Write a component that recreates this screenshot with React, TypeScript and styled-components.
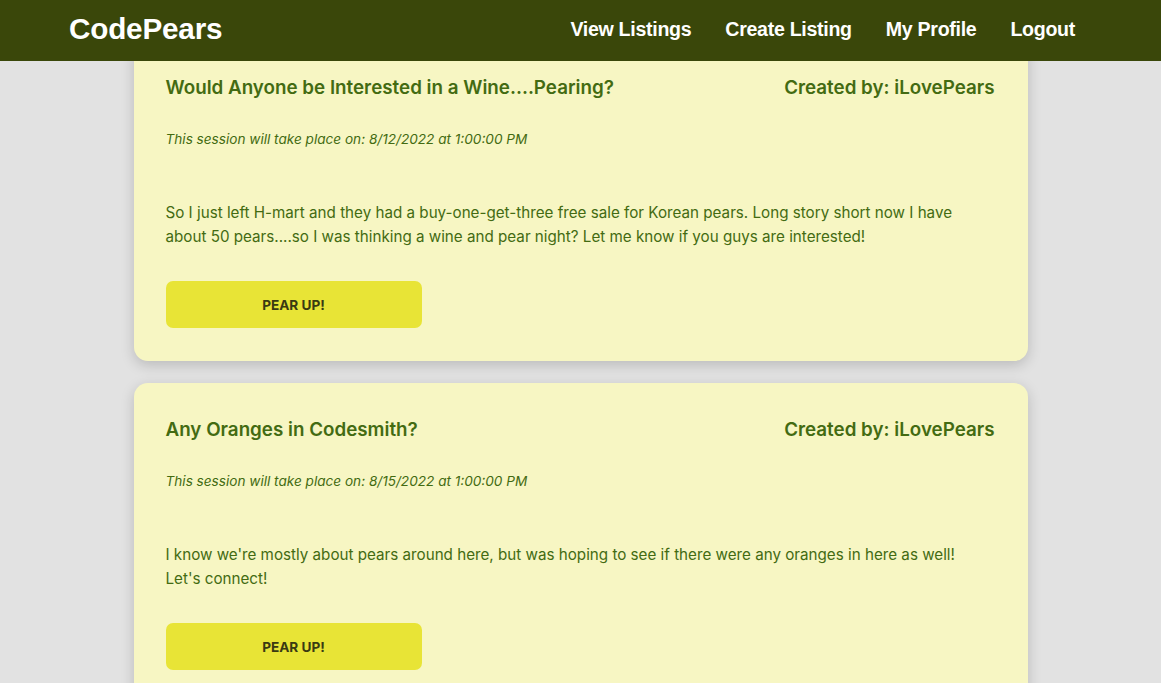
import React from "react";
import styled, { createGlobalStyle } from "styled-components";

const Global = createGlobalStyle`
  html, body { margin: 0; padding: 0; }
  body {
    background: #e2e2e2;
    font-family: Inter, "Noto Sans", sans-serif;
    overflow: hidden;
  }
`;

const Header = styled.header`
  position: fixed;
  top: 0;
  left: 0;
  right: 0;
  height: 61px;
  box-sizing: border-box;
  padding: 0 86px 3px 69px;
  background: #3a470a;
  display: flex;
  align-items: center;
  justify-content: space-between;
  z-index: 10;
`;

const Logo = styled.div`
  font-family: "Liberation Sans", Arial, sans-serif;
  font-weight: 700;
  font-size: 29.7px;
  color: #ffffff;
  letter-spacing: -0.2px;
`;

const Nav = styled.nav`
  display: flex;
  gap: 34px;
`;

const NavLink = styled.a`
  font-family: "Liberation Sans", Arial, sans-serif;
  font-weight: 700;
  font-size: 19.6px;
  color: #ffffff;
  text-decoration: none;
  letter-spacing: -0.3px;
`;

const Main = styled.main`
  display: flex;
  flex-direction: column;
  align-items: center;
  gap: 22px;
  padding-top: 41px;
`;

const Card = styled.section`
  width: 894px;
  box-sizing: border-box;
  background: #f7f6c3;
  border-radius: 14px;
  padding: 33px 33px 33px 32px;
  box-shadow: 0 4px 14px rgba(0, 0, 0, 0.18);
  color: #436b12;
`;

const TitleRow = styled.div`
  display: flex;
  justify-content: space-between;
  align-items: center;
  height: 28px;
`;

const Title = styled.h3`
  margin: 0;
  font-size: 18.8px;
  font-weight: 600;
  line-height: 28px;
  color: #436b12;
`;

const DateLine = styled.p`
  margin: 28px 0 0;
  font-size: 13.6px;
  font-style: italic;
  line-height: 18px;
`;

const Body = styled.p`
  margin: 53px 0 0;
  max-width: 815px;
  font-size: 15.2px;
  line-height: 24px;
`;

const Button = styled.button`
  display: block;
  margin-top: 32px;
  width: 256px;
  height: 47px;
  border: none;
  border-radius: 7px;
  background: #e8e436;
  color: #3a3a12;
  font-family: Inter, "Noto Sans", sans-serif;
  font-weight: 700;
  font-size: 13.6px;
`;

const listings = [
  {
    title: "Would Anyone be Interested in a Wine....Pearing?",
    author: "iLovePears",
    date: "8/12/2022 at 1:00:00 PM",
    body: "So I just left H-mart and they had a buy-one-get-three free sale for Korean pears. Long story short now I have about 50 pears....so I was thinking a wine and pear night? Let me know if you guys are interested!",
  },
  {
    title: "Any Oranges in Codesmith?",
    author: "iLovePears",
    date: "8/15/2022 at 1:00:00 PM",
    body: "I know we're mostly about pears around here, but was hoping to see if there were any oranges in here as well! Let's connect!",
  },
];

export default function App() {
  return (
    <>
      <Global />
      <Header>
        <Logo>CodePears</Logo>
        <Nav>
          <NavLink>View Listings</NavLink>
          <NavLink>Create Listing</NavLink>
          <NavLink>My Profile</NavLink>
          <NavLink>Logout</NavLink>
        </Nav>
      </Header>
      <Main>
        {listings.map((l) => (
          <Card key={l.title}>
            <TitleRow>
              <Title>{l.title}</Title>
              <Title>Created by: {l.author}</Title>
            </TitleRow>
            <DateLine>This session will take place on: {l.date}</DateLine>
            <Body>{l.body}</Body>
            <Button>PEAR UP!</Button>
          </Card>
        ))}
      </Main>
    </>
  );
}
